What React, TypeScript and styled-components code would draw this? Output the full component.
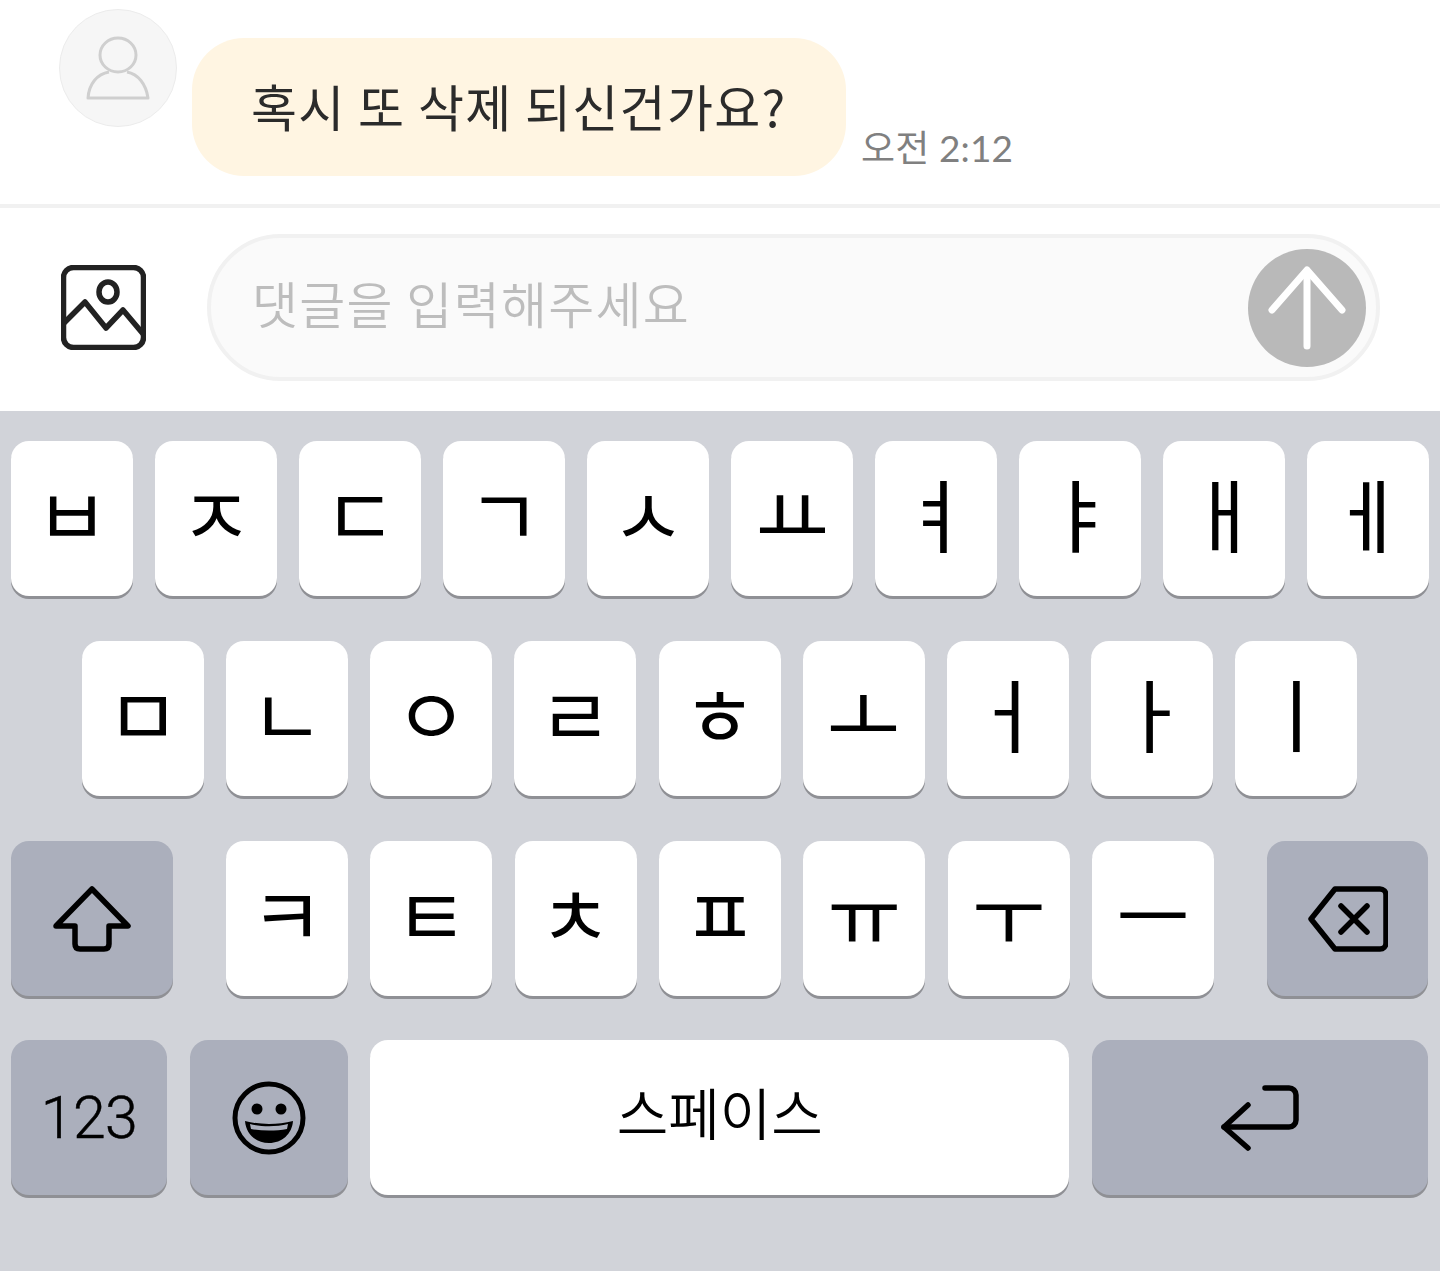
import React from "react";
import styled, { createGlobalStyle } from "styled-components";

const Global = createGlobalStyle`
  html, body { margin: 0; padding: 0; background: #fff; }
  body { font-family: "Noto Sans CJK KR", "Liberation Sans", sans-serif; }
  * { box-sizing: border-box; }
`;

const Page = styled.div`
  width: 1440px;
  height: 1272px;
  overflow: hidden;
  background: #fff;
`;

const ChatRow = styled.div`
  height: 208px;
  display: flex;
  align-items: flex-start;
  padding: 9px 0 0 59px;
  border-bottom: 4px solid #f1f1f1;
`;

const Avatar = styled.div`
  width: 118px;
  height: 118px;
  flex: none;
  border-radius: 50%;
  background: #f6f6f6;
  border: 1px solid #ececec;
  display: flex;
  align-items: center;
  justify-content: center;
`;

const Bubble = styled.div`
  width: 654px;
  height: 138px;
  margin: 29px 0 0 15px;
  padding-left: 59px;
  border-radius: 52px;
  background: #fff5e2;
  color: #2b2b2b;
  font-size: 50px;
  font-weight: 400;
  letter-spacing: 1.3px;
  line-height: 134px;
  white-space: nowrap;
`;

const Time = styled.span`
  margin: 114px 0 0 15px;
  color: #808080;
  font-family: Lato, "Noto Sans CJK KR", sans-serif;
  font-size: 37px;
  letter-spacing: 0.15px;
  line-height: 50px;
  white-space: nowrap;
`;

const Composer = styled.div`
  height: 203px;
  display: flex;
  align-items: center;
  padding: 0 0 4px 61px;
`;

const InputBox = styled.div`
  width: 1173px;
  height: 147px;
  margin: 0 0 0 61px;
  padding: 0 10px 0 41px;
  border: 4px solid #f1f1f1;
  border-radius: 74px;
  background: #fafafa;
  display: flex;
  align-items: center;
  justify-content: space-between;
`;

const Placeholder = styled.span`
  color: #bdbdbd;
  font-size: 50px;
  font-weight: 350;
  letter-spacing: 1.3px;
  white-space: nowrap;
  padding-bottom: 12px;
`;

const SendButton = styled.div`
  width: 118px;
  height: 118px;
  border-radius: 50%;
  background: #b9b9b9;
  display: flex;
  align-items: center;
  justify-content: center;
`;

const Keyboard = styled.div`
  height: 860px;
  padding-top: 30px;
  background: #d1d3d9;
  display: flex;
  flex-direction: column;
  gap: 44px;
`;

const KeyRow = styled.div<{ $left: number; $right: number; $lift?: boolean }>`
  height: 156px;
  display: flex;
  justify-content: space-between;
  padding: 0 ${(p) => p.$right}px 0 ${(p) => p.$left}px;
  margin-top: ${(p) => (p.$lift ? "-1px" : "0")};
`;

const KeyGroup = styled.div`
  display: flex;
  gap: 22.33px;
`;

const Key = styled.div<{ $width?: number; $dark?: boolean }>`
  width: ${(p) => p.$width ?? 122}px;
  height: 155px;
  flex: none;
  border-radius: 18px;
  background: ${(p) => (p.$dark ? "#abafbc" : "#fff")};
  box-shadow: 0 3px 0 #8f9095;
  color: #000;
  display: flex;
  align-items: center;
  justify-content: center;
`;

const Jamo = styled.span`
  font-size: 80px;
  line-height: 1;
  font-weight: 400;
  padding-bottom: 15px;
`;

const NumLabel = styled.span`
  font-family: Roboto, "Liberation Sans", sans-serif;
  font-weight: 300;
  font-size: 59px;
  letter-spacing: -0.5px;
  -webkit-text-stroke: 0.5px #000;
`;

const SpaceLabel = styled.span`
  font-size: 56px;
  font-weight: 350;
  padding-bottom: 14px;
`;

const row1 = ["ㅂ", "ㅈ", "ㄷ", "ㄱ", "ㅅ", "ㅛ", "ㅕ", "ㅑ", "ㅐ", "ㅔ"];
const row2 = ["ㅁ", "ㄴ", "ㅇ", "ㄹ", "ㅎ", "ㅗ", "ㅓ", "ㅏ", "ㅣ"];
const row3 = ["ㅋ", "ㅌ", "ㅊ", "ㅍ", "ㅠ", "ㅜ", "ㅡ"];

const AvatarIcon = () => (
  <svg width="64" height="64" viewBox="0 0 64 64" fill="none" stroke="#cfcfcf" strokeWidth="3">
    <ellipse cx="32" cy="19" rx="18" ry="17" />
    <path d="M23 36C11 38 3 48 2 62H62C60 48 52 38 41 36" strokeLinejoin="round" />
  </svg>
);

const PictureIcon = () => (
  <svg width="85" height="85" viewBox="0 0 85 85" fill="none" stroke="#222" strokeWidth="5.5" strokeLinejoin="round">
    <rect x="2.5" y="2.5" width="80" height="80" rx="10" />
    <ellipse cx="47" cy="27" rx="9" ry="10" />
    <path d="M3 58L24 37L45 63L62 45L83 70" />
  </svg>
);

const ArrowIcon = () => (
  <svg width="78" height="84" viewBox="0 0 78 84" fill="none" stroke="#fff" strokeWidth="7" strokeLinecap="round" strokeLinejoin="round">
    <path d="M39 80V6" />
    <path d="M4 44L39 4L74 44" />
  </svg>
);

const ShiftIcon = () => (
  <svg width="78" height="66" viewBox="0 0 78 66" fill="none" stroke="#000" strokeWidth="5.5" strokeLinejoin="round">
    <path d="M39 3L75 40H56V58Q56 63 51 63H27Q22 63 22 58V40H3Z" />
  </svg>
);

const BackspaceIcon = () => (
  <svg width="80" height="66" viewBox="0 0 80 66" fill="none" stroke="#000" strokeWidth="5.5" strokeLinecap="round" strokeLinejoin="round">
    <path d="M27 3H72A6 6 0 0 1 78 9V57A6 6 0 0 1 72 63H27L3 33Z" />
    <path d="M33 20L59 46M59 20L33 46" />
  </svg>
);

const EmojiIcon = () => (
  <svg width="74" height="74" viewBox="0 0 74 74" fill="none">
    <circle cx="37" cy="37" r="34" stroke="#000" strokeWidth="5" />
    <circle cx="25" cy="28" r="5.5" fill="#000" />
    <circle cx="49" cy="28" r="5.5" fill="#000" />
    <path d="M13 40C28 44 46 44 61 40C60 53 50 62 37 62C24 62 14 53 13 40Z" fill="#000" />
    <path d="M18 43C30 46 44 46 56 43L55 48C44 50 30 50 19 48Z" fill="#abafbc" />
  </svg>
);

const ReturnIcon = () => (
  <svg width="78" height="66" viewBox="0 0 78 66" fill="none" stroke="#000" strokeWidth="5.5" strokeLinecap="round" strokeLinejoin="round">
    <path d="M44 3H68A7 7 0 0 1 75 10V35A7 7 0 0 1 68 42H3" />
    <path d="M27 20L3 42L27 63" />
  </svg>
);

export default function App() {
  return (
    <Page>
      <Global />
      <ChatRow>
        <Avatar>
          <AvatarIcon />
        </Avatar>
        <Bubble>혹시 또 삭제 되신건가요?</Bubble>
        <Time>오전 2:12</Time>
      </ChatRow>
      <Composer>
        <PictureIcon />
        <InputBox>
          <Placeholder>댓글을 입력해주세요</Placeholder>
          <SendButton>
            <ArrowIcon />
          </SendButton>
        </InputBox>
      </Composer>
      <Keyboard>
        <KeyRow $left={11} $right={11}>
          {row1.map((k) => (
            <Key key={k}>
              <Jamo>{k}</Jamo>
            </Key>
          ))}
        </KeyRow>
        <KeyRow $left={82} $right={83}>
          {row2.map((k) => (
            <Key key={k}>
              <Jamo>{k}</Jamo>
            </Key>
          ))}
        </KeyRow>
        <KeyRow $left={11} $right={12}>
          <Key $width={162} $dark>
            <ShiftIcon />
          </Key>
          <KeyGroup>
            {row3.map((k) => (
              <Key key={k}>
                <Jamo>{k}</Jamo>
              </Key>
            ))}
          </KeyGroup>
          <Key $width={161} $dark>
            <BackspaceIcon />
          </Key>
        </KeyRow>
        <KeyRow $left={11} $right={12} $lift>
          <Key $width={156} $dark>
            <NumLabel>123</NumLabel>
          </Key>
          <Key $width={158} $dark>
            <EmojiIcon />
          </Key>
          <Key $width={699}>
            <SpaceLabel>스페이스</SpaceLabel>
          </Key>
          <Key $width={336} $dark>
            <ReturnIcon />
          </Key>
        </KeyRow>
      </Keyboard>
    </Page>
  );
}
